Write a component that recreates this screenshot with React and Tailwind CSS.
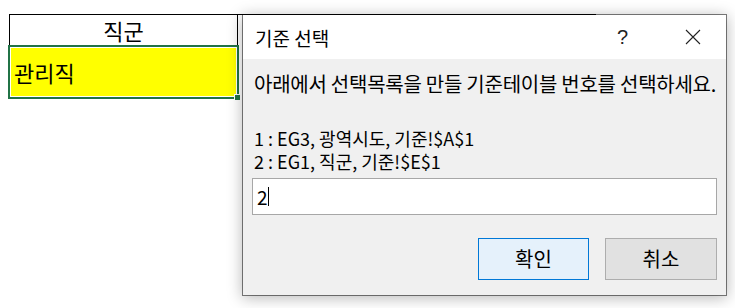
export default function App() {
    return (
        <div className="relative w-[735px] h-[308px] overflow-hidden bg-white text-black font-['Noto_Sans_CJK_KR','Noto_Sans',sans-serif]">
            {/* Sheet cells */}
            <div className="pt-[14px] pl-[9px]">
                <div className="flex">
                    <div className="w-[229px] h-[32px] border border-black flex items-center justify-center text-[22px] leading-none">
                        직군
                    </div>
                    <div className="w-[358px] h-[32px] border-t border-black" />
                </div>
                <div className="relative -ml-[1px] -mt-[1px] w-[231px] h-[54px] border-2 border-[#217346]">
                    <div className="h-full border border-white bg-[#ffff00] flex items-center pl-[3px] text-[22px] leading-none">
                        관리직
                    </div>
                    <div className="absolute -right-[4px] -bottom-[4px] w-[7px] h-[7px] bg-[#217346] border border-white" />
                </div>
            </div>

            {/* Dialog */}
            <div className="absolute left-[242px] top-[14px] w-[485px] h-[282px] border border-[rgba(0,0,0,0.5)] bg-clip-padding bg-[#f0f0f0] shadow-[0_2px_14px_rgba(0,0,0,0.28)] flex flex-col">
                <div className="h-[44px] bg-white flex items-center pl-[12px]">
                    <span className="text-[19px] leading-none">기준 선택</span>
                    <span className="ml-auto mr-[57px] text-[20px] leading-none font-['Liberation_Sans',sans-serif] text-[#222]">?</span>
                    <svg width="16" height="16" viewBox="0 0 16 16" className="mr-[25px]">
                        <path d="M1 1 L15 15 M15 1 L1 15" stroke="#222" strokeWidth="1.1" fill="none" />
                    </svg>
                </div>
                <div className="flex flex-col px-[9px]">
                    <p className="mt-[13px] ml-[2px] text-[20px] leading-[24px] tracking-[-0.25px] whitespace-nowrap">
                        아래에서 선택목록을 만들 기준테이블 번호를 선택하세요.
                    </p>
                    <div className="mt-[31px] ml-[2px] text-[18px] leading-[23px]">
                        <p>1 : EG3, 광역시도, 기준!$A$1</p>
                        <p>2 : EG1, 직군, 기준!$E$1</p>
                    </div>
                    <div className="mt-[5px] h-[37px] border border-[#a7a7a7] bg-white flex items-center pl-[4px] text-[19px] leading-none">
                        <span>2</span>
                        <span className="w-[1px] h-[19px] bg-black" />
                    </div>
                    <div className="mt-[23px] flex justify-end gap-[16px]">
                        <button className="w-[111px] h-[42px] border border-[#0078d7] bg-[#e5f1fb] text-[20px] leading-none">
                            확인
                        </button>
                        <button className="w-[112px] h-[42px] border border-[#adadad] bg-[#e1e1e1] text-[20px] leading-none">
                            취소
                        </button>
                    </div>
                </div>
            </div>
        </div>
    );
}
